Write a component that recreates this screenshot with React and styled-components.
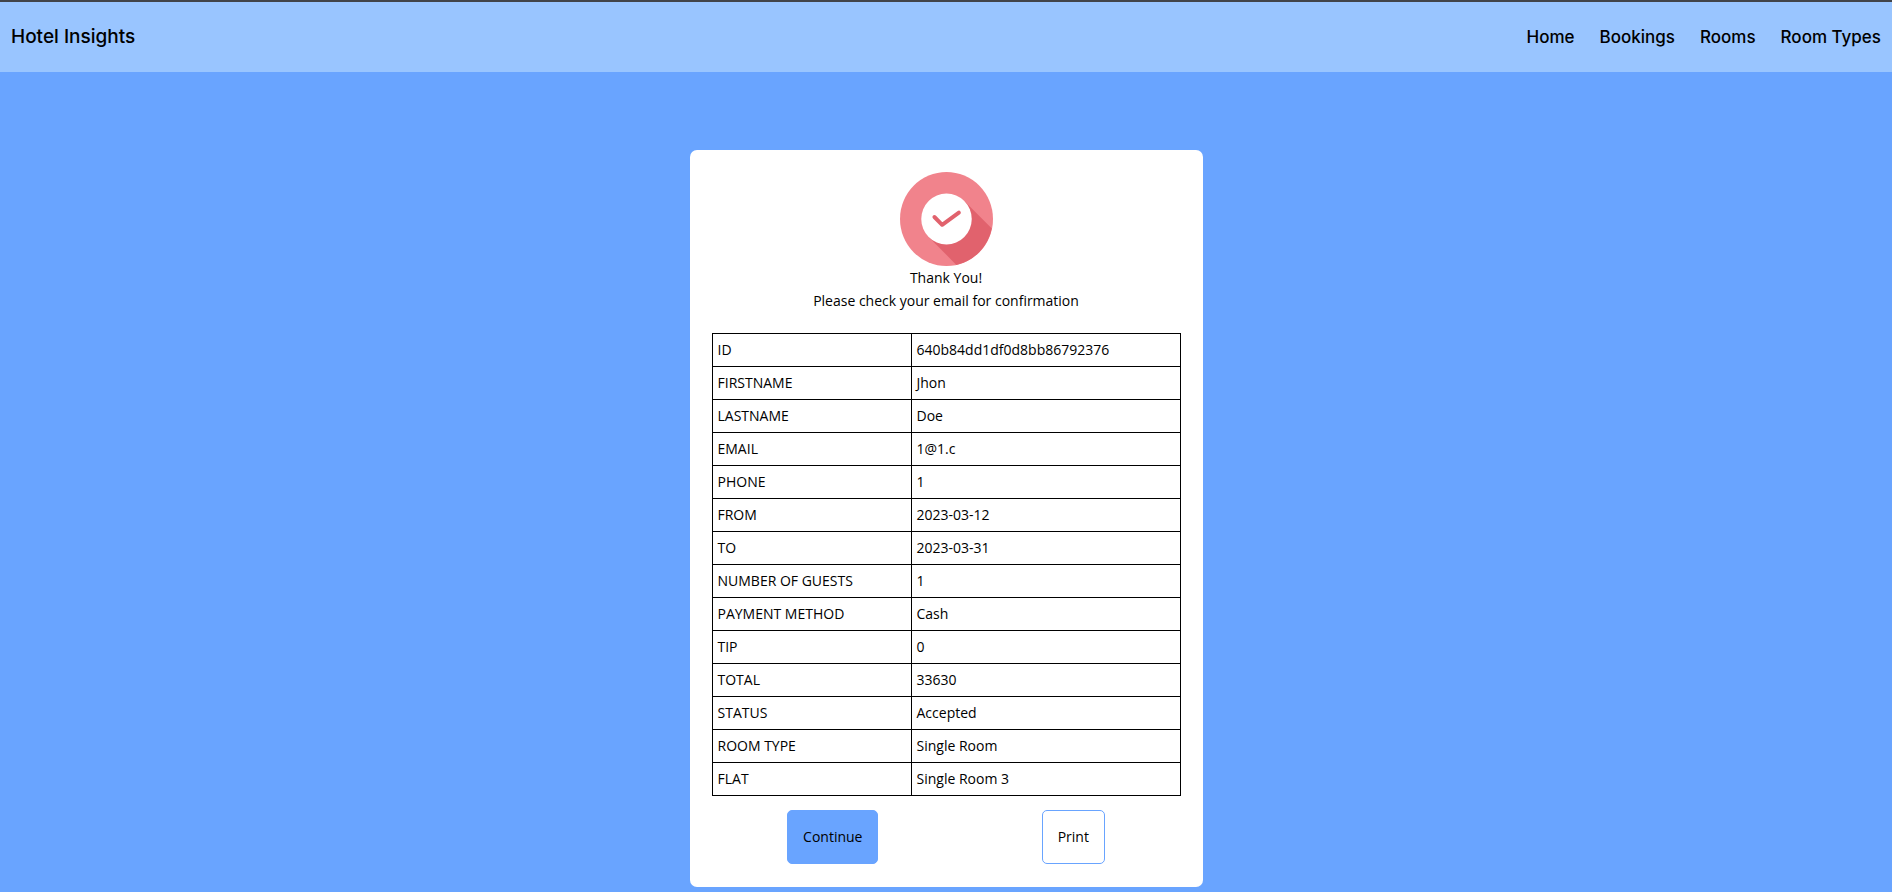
import React from "react";
import styled, { createGlobalStyle } from "styled-components";

const GlobalStyle = createGlobalStyle`
  *, *::before, *::after {
    box-sizing: border-box;
  }
  body {
    margin: 0;
    min-height: 100vh;
    background: #69a4ff;
    color: #000;
    font-family: "Open Sans", "Noto Sans", sans-serif;
    font-size: 14px;
    line-height: 24px;
  }
`;

const Header = styled.header`
  display: flex;
  align-items: center;
  justify-content: space-between;
  height: 72px;
  padding: 0 11px;
  border-top: 2px solid #41444a;
  background: #99c5ff;
  font-family: Inter, sans-serif;
  font-weight: 500;
`;

const Brand = styled.a`
  color: inherit;
  font-size: 19px;
  text-decoration: none;
`;

const Nav = styled.nav`
  display: flex;
  gap: 25px;
`;

const NavLink = styled.a`
  color: inherit;
  font-size: 17px;
  text-decoration: none;
`;

const Main = styled.main`
  display: flex;
  justify-content: center;
  padding: 78px 0 5px;
`;

const Card = styled.section`
  width: 100%;
  max-width: 513px;
  padding: 22px 16px 23px;
  border-radius: 7px;
  background: #fff;
`;

const Intro = styled.div`
  display: flex;
  flex-direction: column;
  align-items: center;
  margin-bottom: 21px;
  line-height: 23px;
  text-align: center;
`;

const Message = styled.p`
  margin: 0;
`;

const TableWrap = styled.div`
  padding: 0 6px;
`;

const Table = styled.table`
  width: 100%;
  border-collapse: collapse;
  table-layout: fixed;
`;

const labelWidth = "199px";

const Label = styled.th`
  width: ${labelWidth};
  padding: 4px 5px;
  border: 1px solid #000;
  font-weight: 400;
  text-align: left;
  text-transform: uppercase;
`;

const Value = styled.td`
  padding: 4px 5px;
  border: 1px solid #000;
`;

const Actions = styled.div`
  display: flex;
  justify-content: space-around;
  margin-top: 14px;
`;

const Button = styled.button`
  height: 54px;
  padding: 0 15px;
  border: 1px solid #69a4ff;
  border-radius: 5px;
  background: ${({ $filled }) => ($filled ? "#69a4ff" : "#fff")};
  color: inherit;
  font: inherit;
  cursor: pointer;
`;

const links = ["Home", "Bookings", "Rooms", "Room Types"];

const details = [
  ["id", "640b84dd1df0d8bb86792376"],
  ["firstname", "Jhon"],
  ["lastname", "Doe"],
  ["email", "1@1.c"],
  ["phone", "1"],
  ["from", "2023-03-12"],
  ["to", "2023-03-31"],
  ["number of guests", "1"],
  ["payment method", "Cash"],
  ["tip", "0"],
  ["total", "33630"],
  ["status", "Accepted"],
  ["room type", "Single Room"],
  ["flat", "Single Room 3"],
];

function SuccessIcon() {
  return (
    <svg width="93" height="94" viewBox="0 0 94 94" preserveAspectRatio="none" aria-hidden="true">
      <circle cx="47" cy="47" r="47" fill="#f1838c" />
      <path d="M65 29 L92.8 56.5 A47 47 0 0 1 57 92.9 L29 65 Z" fill="#e1626d" />
      <circle cx="47" cy="47" r="25.5" fill="#fff" />
      <path
        d="M34.8 45 L42.6 52.8 L59.5 40.6"
        fill="none"
        stroke="#e1626d"
        strokeWidth="4"
        strokeLinecap="round"
        strokeLinejoin="round"
      />
    </svg>
  );
}

export default function App() {
  return (
    <>
      <GlobalStyle />
      <Header>
        <Brand href="#">Hotel Insights</Brand>
        <Nav>
          {links.map((link) => (
            <NavLink key={link} href="#">{link}</NavLink>
          ))}
        </Nav>
      </Header>
      <Main>
        <Card>
          <Intro>
            <SuccessIcon />
            <Message>Thank You!</Message>
            <Message>Please check your email for confirmation</Message>
          </Intro>
          <TableWrap>
            <Table>
              <tbody>
                {details.map(([label, value]) => (
                  <tr key={label}>
                    <Label scope="row">{label}</Label>
                    <Value>{value}</Value>
                  </tr>
                ))}
              </tbody>
            </Table>
          </TableWrap>
          <Actions>
            <Button type="button" $filled>Continue</Button>
            <Button type="button">Print</Button>
          </Actions>
        </Card>
      </Main>
    </>
  );
}
